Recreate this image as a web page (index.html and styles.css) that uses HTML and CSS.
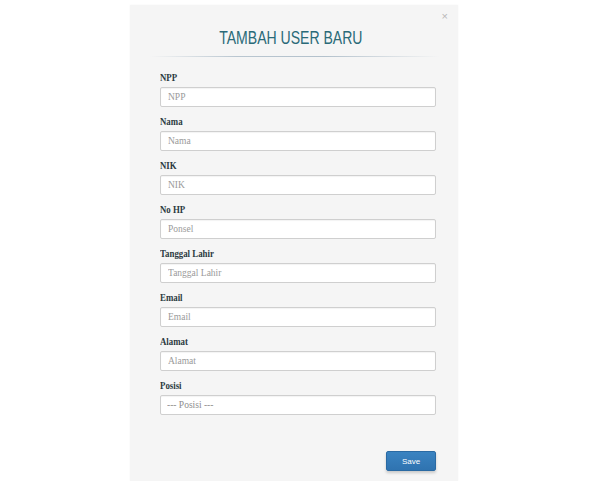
FILE: index.html
```html
<!DOCTYPE html>
<html lang="id">
<head>
<meta charset="utf-8">
<title>Tambah User Baru</title>
<link rel="stylesheet" href="styles.css">
</head>
<body>
<div class="stage">
  <div class="modal">
    <button class="close" type="button" aria-label="Close">×</button>
    <div class="modal-header">
      <h2 class="title"><span class="title-text">TAMBAH USER BARU</span></h2>
    </div>
    <div class="divider"></div>
    <form class="form">
      <div class="group">
        <label class="label"><span class="label-text">NPP</span></label>
        <input class="control" type="text" placeholder="NPP">
      </div>
      <div class="group">
        <label class="label"><span class="label-text">Nama</span></label>
        <input class="control" type="text" placeholder="Nama">
      </div>
      <div class="group">
        <label class="label"><span class="label-text">NIK</span></label>
        <input class="control" type="text" placeholder="NIK">
      </div>
      <div class="group">
        <label class="label"><span class="label-text">No HP</span></label>
        <input class="control" type="text" placeholder="Ponsel">
      </div>
      <div class="group">
        <label class="label"><span class="label-text">Tanggal Lahir</span></label>
        <input class="control" type="text" placeholder="Tanggal Lahir">
      </div>
      <div class="group">
        <label class="label"><span class="label-text">Email</span></label>
        <input class="control" type="text" placeholder="Email">
      </div>
      <div class="group">
        <label class="label"><span class="label-text">Alamat</span></label>
        <input class="control" type="text" placeholder="Alamat">
      </div>
      <div class="group">
        <label class="label"><span class="label-text">Posisi</span></label>
        <select class="control select">
          <option>--- Posisi ---</option>
        </select>
      </div>
      <div class="footer">
        <button class="btn-save" type="button">Save</button>
      </div>
    </form>
  </div>
</div>
</body>
</html>
```

FILE: styles.css
```css
html, body {
  margin: 0;
  padding: 0;
  background: #ffffff;
}

.stage {
  width: 596px;
  height: 481px;
  display: flex;
  justify-content: flex-start;
  padding-left: 130px;
  padding-top: 5px;
  box-sizing: border-box;
  overflow: hidden;
}

.modal {
  position: relative;
  width: 328px;
  height: 476px;
  background: #f5f5f5;
  box-shadow: 0 0 2px rgba(0, 0, 0, 0.04);
  display: flex;
  flex-direction: column;
  box-sizing: border-box;
  padding-top: 23px;
}

.close {
  position: absolute;
  top: 5px;
  right: 10px;
  border: 0;
  background: transparent;
  padding: 0;
  font-family: "Liberation Sans", Arial, sans-serif;
  font-size: 11px;
  line-height: 12px;
  color: #b8b8b8;
}

.modal-header {
  display: flex;
  justify-content: center;
  padding-right: 6px;
}

.title {
  margin: 0;
  font-family: "Liberation Sans", Arial, sans-serif;
  font-weight: normal;
  font-size: 18px;
  line-height: 20px;
  color: #2a6a78;
}

.title-text {
  display: inline-block;
  transform: scaleX(0.78);
}

.divider {
  height: 1px;
  margin: 8px 18px 0 20px;
  background: linear-gradient(to right, rgba(200, 210, 218, 0) 0%, #b9c6d0 30%, #b3c1cc 60%, rgba(200, 210, 218, 0) 100%);
}

.form {
  display: flex;
  flex-direction: column;
  padding: 14px 22px 0 30px;
  flex: 1;
}

.group {
  display: flex;
  flex-direction: column;
  margin-bottom: 8px;
}

.label {
  font-family: "Liberation Serif", "Times New Roman", serif;
  font-weight: bold;
  font-size: 10.5px;
  line-height: 14px;
  color: #2b3a3f;
  margin-bottom: 2px;
}

.label-text {
  display: inline-block;
  transform: scaleX(0.84);
  transform-origin: left center;
}

.control {
  box-sizing: border-box;
  height: 20px;
  width: 276px;
  margin: 0;
  padding: 0 7px;
  border: 1px solid #cfcfcf;
  border-radius: 2px;
  background: #ffffff;
  box-shadow: inset 0 1px 1px rgba(0, 0, 0, 0.05);
  font-family: "Liberation Serif", "Times New Roman", serif;
  font-size: 9.5px;
  color: #8e8e8e;
  outline: none;
}

.control::placeholder {
  color: #9a9a9a;
}

.select {
  appearance: none;
  -webkit-appearance: none;
  padding-left: 6px;
}

.footer {
  display: flex;
  justify-content: flex-end;
  margin-top: 28px;
  width: 276px;
}

.btn-save {
  width: 50px;
  height: 20px;
  border: 1px solid #2a6aa3;
  border-radius: 2px;
  background: linear-gradient(#3a83c1, #2f73b0);
  box-shadow: 0 2px 3px rgba(0, 0, 0, 0.18);
  color: #ffffff;
  font-family: "Liberation Sans", Arial, sans-serif;
  font-size: 8px;
  padding: 0;
}
```
